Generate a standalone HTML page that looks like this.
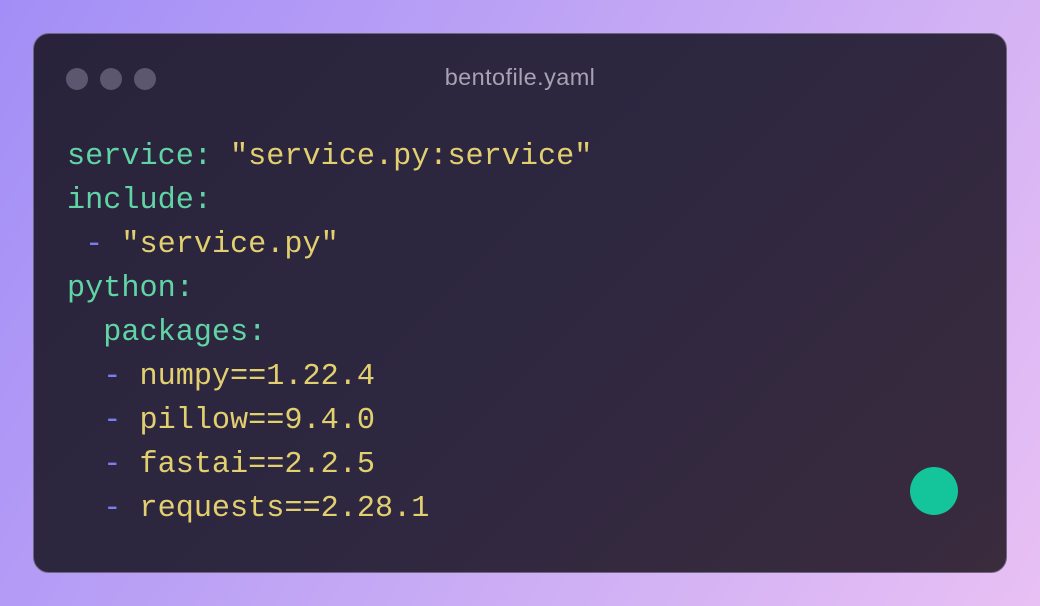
<!DOCTYPE html>
<html><head><style>
html,body{margin:0;padding:0;}
body{width:1040px;height:606px;overflow:hidden;background:linear-gradient(120deg,#a28ef6 0%,#c4a8f5 50%,#e8c0f4 100%);position:relative;font-family:"Liberation Sans",sans-serif;}
.card{position:absolute;left:33px;top:33px;width:972px;height:538px;border-radius:16px;border:1px solid #6e6680;background:linear-gradient(135deg,#28233b 0%,#2e2740 50%,#3a2b3d 100%);}
.dot{position:absolute;top:34px;width:22px;height:22px;border-radius:50%;background:#5c5670;}
.title{position:absolute;left:0;width:972px;top:30px;text-align:center;color:#a8a2b4;font-size:23.5px;letter-spacing:0.4px;}
pre{position:absolute;left:33px;top:101px;margin:0;font-family:"Liberation Mono",monospace;font-size:30.2px;line-height:44px;color:#e2cf6f;}
.k{color:#60d4a4}.d{color:#7c7df0}
.g{position:absolute;left:876px;top:433px;width:48px;height:48px;border-radius:50%;background:#14c59c;}
</style></head><body>
<div class="card">
<div class="dot" style="left:32px"></div><div class="dot" style="left:66px"></div><div class="dot" style="left:100px"></div>
<div class="title">bentofile.yaml</div>
<pre><span class="k">service:</span> "service.py:service"
<span class="k">include:</span>
 <span class="d">-</span> "service.py"
<span class="k">python:</span>
  <span class="k">packages:</span>
  <span class="d">-</span> numpy==1.22.4
  <span class="d">-</span> pillow==9.4.0
  <span class="d">-</span> fastai==2.2.5
  <span class="d">-</span> requests==2.28.1</pre>
<div class="g"></div>
</div>
</body></html>
